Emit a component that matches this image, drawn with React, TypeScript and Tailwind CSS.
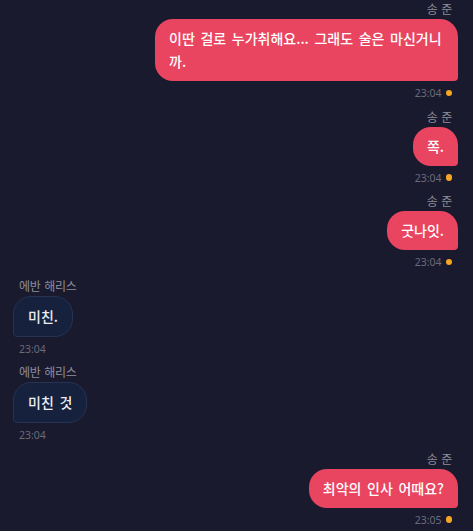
import React from "react";

type Msg = {
  side: "sent" | "recv";
  name: string;
  text: string;
  time: string;
};

const messages: Msg[] = [
  { side: "sent", name: "송 준", text: "이딴 걸로 누가취해요... 그래도 술은 마신거니까.", time: "23:04" },
  { side: "sent", name: "송 준", text: "쪽.", time: "23:04" },
  { side: "sent", name: "송 준", text: "굿나잇.", time: "23:04" },
  { side: "recv", name: "에반 해리스", text: "미친.", time: "23:04" },
  { side: "recv", name: "에반 해리스", text: "미친 것", time: "23:04" },
  { side: "sent", name: "송 준", text: "최악의 인사 어때요?", time: "23:05" },
];

function Message({ m }: { m: Msg }) {
  const sent = m.side === "sent";
  return (
    <div className={sent ? "flex flex-col items-end" : "flex flex-col items-start"}>
      <div className="px-1.5 mb-[3px] text-[12px] leading-[14px] tracking-[-0.3px] [word-spacing:1.5px] text-[#8d8d9c]">
        {m.name}
      </div>
      {sent ? (
        <div className="max-w-[303px] rounded-[18px] rounded-br-[4px] bg-[#e94560] px-3.5 py-[8px] text-[14px] font-medium leading-[23px] [word-spacing:2.5px] text-white">
          {m.text}
        </div>
      ) : (
        <div className="max-w-[303px] rounded-[18px] rounded-bl-[4px] border border-[#263353] bg-[#16213e] px-3.5 py-[8px] text-[14px] font-medium leading-[23px] [word-spacing:2.5px] text-[#ececf2]">
          {m.text}
        </div>
      )}
      <div className="mt-[5px] px-1.5 flex items-center gap-[4px] h-[14px] font-['Noto_Sans',sans-serif] text-[10.5px] leading-[14px] text-[#6a6a7c]">
        <span>{m.time}</span>
        {sent && <span className="block w-[6.5px] h-[6.5px] rounded-full bg-[#f5a623]" />}
      </div>
    </div>
  );
}

export default function App() {
  return (
    <div className="min-h-screen overflow-hidden bg-[#1a1a2e] pl-[13px] pr-[15px] pt-[2px] flex flex-col gap-[9.5px] font-['Noto_Sans_CJK_KR','Noto_Sans',sans-serif]">
      {messages.map((m, i) => (
        <Message key={i} m={m} />
      ))}
    </div>
  );
}
